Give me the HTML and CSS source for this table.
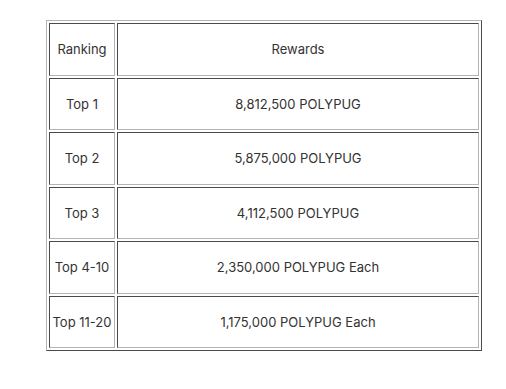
FILE: index.html
```html
<!DOCTYPE html>
<html>
<head>
<meta charset="utf-8">
<link rel="stylesheet" href="styles.css">
</head>
<body>
<table class="rewards">
  <colgroup><col class="col-rank"><col class="col-reward"></colgroup>
  <tr><td>Ranking</td><td>Rewards</td></tr>
  <tr><td>Top 1</td><td>8,812,500 POLYPUG</td></tr>
  <tr><td>Top 2</td><td>5,875,000 POLYPUG</td></tr>
  <tr><td>Top 3</td><td>4,112,500 POLYPUG</td></tr>
  <tr><td>Top 4-10</td><td>2,350,000 POLYPUG Each</td></tr>
  <tr><td>Top 11-20</td><td>1,175,000 POLYPUG Each</td></tr>
</table>
</body>
</html>
```
FILE: styles.css
```css
html, body {
  margin: 0;
  background: #ffffff;
}
body {
  padding: 20px 0 0 46px;
  font-family: "Inter", "Liberation Sans", sans-serif;
  font-size: 13px;
  color: #333333;
}
.rewards {
  table-layout: fixed;
  width: 436px;
  border-collapse: separate;
  border-spacing: 2px;
  border-style: solid;
  border-width: 1px;
  border-color: #b4b4b4 #4a4a4a #4a4a4a #b4b4b4;
}
.col-rank { width: 66px; }
.rewards tr { height: 52.5px; }
.rewards td {
  padding: 0;
  text-align: center;
  vertical-align: middle;
  line-height: 16px;
  border-style: solid;
  border-width: 1px;
  border-color: #4a4a4a #b4b4b4 #b4b4b4 #4a4a4a;
  white-space: nowrap;
}
```
